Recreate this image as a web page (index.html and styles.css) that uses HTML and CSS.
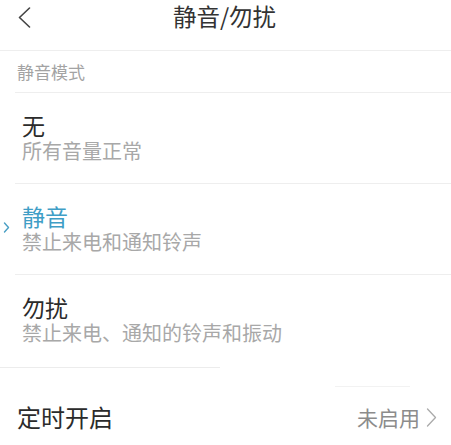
FILE: index.html
```html
<!DOCTYPE html>
<html lang="zh-CN">
<head>
<meta charset="utf-8">
<title>静音/勿扰</title>
<link rel="stylesheet" href="styles.css">
</head>
<body>
<div class="page">
  <header class="topbar">
    <div class="back">
      <svg width="13" height="21" viewBox="0 0 13 21"><polyline points="11.5,1 1.5,10.5 11.5,20" fill="none" stroke="#444" stroke-width="1.6" stroke-linecap="round" stroke-linejoin="round"/></svg>
    </div>
    <div class="title">静音/勿扰</div>
    <div></div>
  </header>

  <div class="section-label"><span>静音模式</span></div>

  <div class="item">
    <div class="item-title">无</div>
    <div class="item-sub">所有音量正常</div>
  </div>
  <div class="item selected">
    <svg class="mark" width="7" height="11" viewBox="0 0 7 11"><polyline points="1.5,1 5.5,5.5 1.5,10" fill="none" stroke="#4a9fc4" stroke-width="1.4" stroke-linecap="round" stroke-linejoin="round"/></svg>
    <div class="item-title">静音</div>
    <div class="item-sub">禁止来电和通知铃声</div>
  </div>
  <div class="item last">
    <div class="item-title">勿扰</div>
    <div class="item-sub">禁止来电、通知的铃声和振动</div>
  </div>

  <div class="gap">
    <div class="gap-line-left"></div>
    <div class="gap-line-right"></div>
  </div>

  <div class="row">
    <div class="row-title">定时开启</div>
    <div class="row-value">
      <span>未启用</span>
      <svg width="11" height="19" viewBox="0 0 11 19"><polyline points="1.5,1 9.5,9.5 1.5,18" fill="none" stroke="#aaa" stroke-width="1.3" stroke-linecap="round" stroke-linejoin="round"/></svg>
    </div>
  </div>
</div>
</body>
</html>
```

FILE: styles.css
```css
* { box-sizing: border-box; }
html, body { margin: 0; padding: 0; background: #fff; }
body {
  font-family: "Noto Sans CJK SC", "Noto Sans", sans-serif;
  color: #333;
}
.page { width: 451px; }

.topbar {
  height: 51px;
  border-bottom: 1px solid #eeeeee;
  display: grid;
  grid-template-columns: 1fr auto 1fr;
  align-items: start;
}
.back {
  padding-left: 18px;
  padding-top: 7px;
  display: flex;
}
.title {
  font-size: 23.5px;
  line-height: 32px;
  color: #333;
  padding-right: 2px;
}

.section-label {
  margin-left: 15px;
  height: 42px;
  border-bottom: 1px solid #eeeeee;
  display: flex;
  align-items: center;
  padding-left: 2px;
  padding-bottom: 1px;
  font-size: 17px;
  color: #a3a3a3;
}

.item {
  position: relative;
  margin-left: 15px;
  height: 91px;
  border-bottom: 1px solid #eeeeee;
  padding: 19px 0 0 7px;
}
.item.last { height: 92px; border-bottom: none; }
.item-title {
  font-size: 23px;
  line-height: 27px;
  color: #2b2b2b;
}
.item-sub {
  font-size: 20px;
  line-height: 24px;
  color: #a8a8a8;
}
.selected .item-title { color: #3f9ec6; }
.mark {
  position: absolute;
  left: -12px;
  top: 38px;
}

.gap {
  height: 20px;
  display: flex;
  align-items: flex-start;
}
.gap-line-left {
  width: 220px;
  height: 1px;
  background: #ececec;
}
.gap-line-right {
  width: 75px;
  height: 1px;
  margin-left: 115px;
  margin-top: 19px;
  background: #f2f2f2;
}

.row {
  display: flex;
  justify-content: space-between;
  align-items: center;
  padding: 0 14px 0 17px;
  height: 60px;
}
.row-title {
  font-size: 24px;
  line-height: 30px;
  color: #2b2b2b;
}
.row-value {
  display: flex;
  align-items: center;
  gap: 6px;
  font-size: 21px;
  line-height: 30px;
  color: #8c8c8c;
}
```
